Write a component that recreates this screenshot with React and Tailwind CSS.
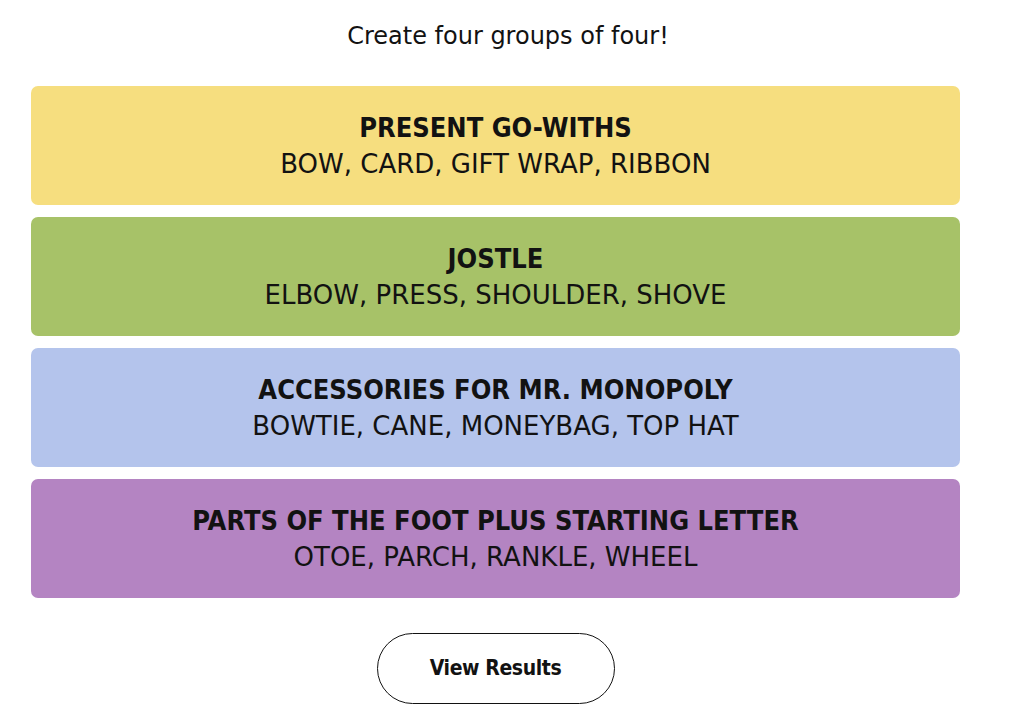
import React from 'react';

const groups = [
  { title: 'PRESENT GO-WITHS', words: 'BOW, CARD, GIFT WRAP, RIBBON', color: 'bg-[#f6de7f]' },
  { title: 'JOSTLE', words: 'ELBOW, PRESS, SHOULDER, SHOVE', color: 'bg-[#a7c268]' },
  { title: 'ACCESSORIES FOR MR. MONOPOLY', words: 'BOWTIE, CANE, MONEYBAG, TOP HAT', color: 'bg-[#b4c4ec]' },
  { title: 'PARTS OF THE FOOT PLUS STARTING LETTER', words: 'OTOE, PARCH, RANKLE, WHEEL', color: 'bg-[#b484c2]' },
];

const narrow = { fontFamily: '"DejaVu Sans Condensed", "Liberation Sans", sans-serif' };
const wide = { fontFamily: '"DejaVu Sans", "Liberation Sans", sans-serif' };

export default function App() {
  return (
    <div className="min-h-screen bg-white text-[#121212]">
      <div className="ml-[31px] w-[929px] flex flex-col items-center">
        <p className="mt-[20px] pl-[25px] text-[24px] leading-[32px]" style={wide}>Create four groups of four!</p>

        <div className="mt-[34px] w-full flex flex-col gap-[12px]">
          {groups.map(g => (
            <div key={g.title} className={`${g.color} h-[119px] rounded-[7px] flex flex-col items-center justify-center`}>
              <h2 className="text-[27px] leading-[36px] font-bold" style={narrow}>{g.title}</h2>
              <p className="text-[26px] leading-[36px]" style={wide}>{g.words}</p>
            </div>
          ))}
        </div>

        <button
          className="mt-[35px] w-[238px] h-[71px] rounded-full border-[1.5px] border-[#121212] text-[21px] tracking-[-0.4px] font-bold"
          style={narrow}
        >
          View Results
        </button>
      </div>
    </div>
  );
}
